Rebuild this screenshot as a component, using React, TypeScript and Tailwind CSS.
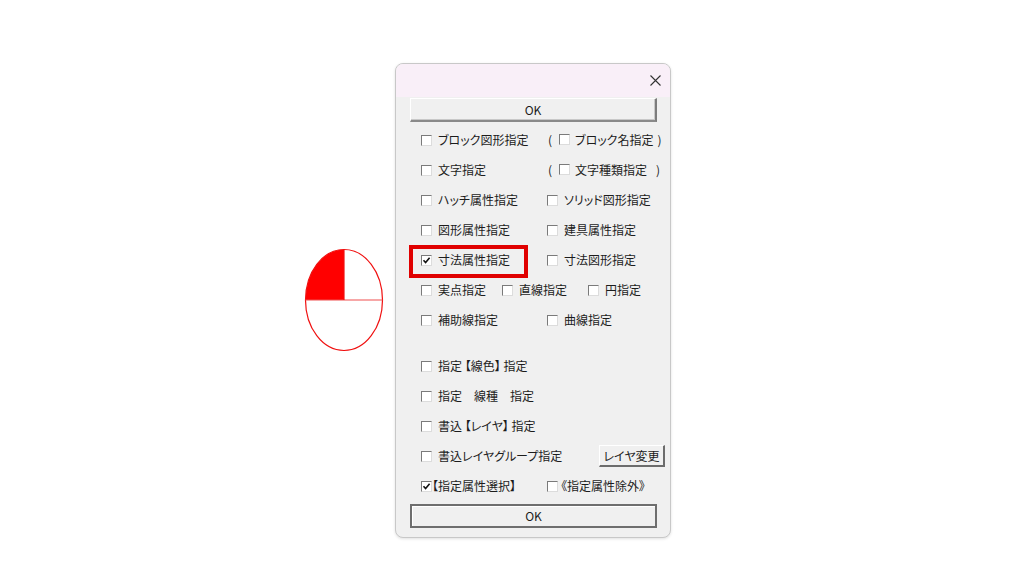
import React from "react";

const font = "font-['Noto_Sans_CJK_JP','Noto_Sans',sans-serif] [font-feature-settings:'palt']";

function Box({ checked = false }: { checked?: boolean }) {
  return (
    <span className="relative inline-block w-[11px] h-[11px] shrink-0 bg-white border-t border-l border-t-[#7a7a7a] border-l-[#7a7a7a] border-r border-b border-r-[#dcdcdc] border-b-[#dcdcdc]">
      {checked && (
        <svg className="absolute left-[0px] top-[0px]" width="9" height="9" viewBox="0 0 9 9">
          <path d="M1.5 4.2 L3.6 6.5 L7.6 1.8" fill="none" stroke="#111" strokeWidth="1.6" />
        </svg>
      )}
    </span>
  );
}

function Item({ label, checked = false, gap = "ml-[6px]" }: { label: string; checked?: boolean; gap?: string }) {
  return (
    <span className="inline-flex items-center">
      <Box checked={checked} />
      <span className={`${gap} whitespace-pre`}>{label}</span>
    </span>
  );
}

function Row({ children, className = "" }: { children: React.ReactNode; className?: string }) {
  return <div className={`relative flex items-center h-[30px] pl-[25px] ${className}`}>{children}</div>;
}

function Cell1({ children }: { children: React.ReactNode }) {
  return <div className="w-[126px] shrink-0 flex items-center">{children}</div>;
}

export default function App() {
  return (
    <div className={`w-[1024px] h-[576px] bg-white flex items-start text-[12px] text-[#1c1c1c] ${font}`}>
      <svg className="ml-[304px] mt-[248px] shrink-0" width="80" height="104" viewBox="0 0 80 104">
        <path d="M40 52 L1.5 52 A38.5 50.5 0 0 1 40 1.5 Z" fill="#ff0000" />
        <ellipse cx="40" cy="52" rx="38.5" ry="50.5" fill="none" stroke="#f01010" strokeWidth="1.2" />
        <line x1="1.5" y1="52" x2="78.5" y2="52" stroke="#f05050" strokeWidth="1.2" />
        <line x1="40" y1="1.5" x2="40" y2="52" stroke="#f01010" strokeWidth="1.2" />
      </svg>

      <div className="ml-[11px] mt-[63px] w-[276px] h-[475px] shrink-0 rounded-[8px] border border-[#c8c8c8] bg-[#f0f0f0] overflow-hidden shadow-[0_1px_3px_rgba(0,0,0,0.12)] flex flex-col">
        <div className="h-[33px] bg-[#f9eff8] flex items-center justify-end pr-[9px]">
          <svg width="11" height="11" viewBox="0 0 11 11">
            <path d="M0.5 0.5 L10.5 10.5 M10.5 0.5 L0.5 10.5" stroke="#333" strokeWidth="1.1" />
          </svg>
        </div>

        <div className="ml-[14px] mt-[1px] w-[247px] h-[24px] flex items-center justify-center bg-[#f0f0f0] border-t border-l border-t-[#ffffff] border-l-[#ffffff] border-r-2 border-b-2 border-r-[#7c7c7c] border-b-[#8a8a8a] shadow-[inset_-1px_-1px_0_#c8c8c8]">
          OK
        </div>

        <div className="mt-[3px] flex flex-col">
          <Row>
            <Cell1><Item label="ブロック図形指定" /></Cell1>
            <span className="ml-[1px]">(</span>
            <span className="ml-[7px]"><Item label="ブロック名指定" gap="ml-[5px]" /></span>
            <span className="ml-[4px]">)</span>
          </Row>
          <Row>
            <Cell1><Item label="文字指定" /></Cell1>
            <span className="ml-[1px]">(</span>
            <span className="ml-[7px]"><Item label="文字種類指定" gap="ml-[5px]" /></span>
            <span className="ml-[9px]">)</span>
          </Row>
          <Row>
            <Cell1><Item label="ハッチ属性指定" /></Cell1>
            <Item label="ソリッド図形指定" />
          </Row>
          <Row>
            <Cell1><Item label="図形属性指定" /></Cell1>
            <Item label="建具属性指定" />
          </Row>
          <Row>
            <div className="absolute left-[13px] top-[0px] w-[119px] h-[33px] border-[4px] border-[#e00000]" />
            <Cell1><Item label="寸法属性指定" checked /></Cell1>
            <Item label="寸法図形指定" />
          </Row>
          <Row>
            <div className="w-[81px] shrink-0 flex items-center"><Item label="実点指定" /></div>
            <div className="w-[86px] shrink-0 flex items-center"><Item label="直線指定" /></div>
            <Item label="円指定" />
          </Row>
          <Row>
            <Cell1><Item label="補助線指定" /></Cell1>
            <Item label="曲線指定" />
          </Row>
        </div>

        <div className="mt-[16px] flex flex-col">
          <Row><Item label="指定 【線色】 指定" /></Row>
          <Row><Item label="指定　線種　指定" /></Row>
          <Row><Item label="書込 【レイヤ】 指定" /></Row>
          <Row>
            <Item label="書込レイヤグループ指定" />
            <div className="ml-auto mr-[5px] w-[66px] h-[22px] flex items-center justify-center bg-[#f0f0f0] border-t border-l border-t-white border-l-white border-r-2 border-b-2 border-r-[#6c6c6c] border-b-[#6c6c6c]">
              レイヤ変更
            </div>
          </Row>
          <Row>
            <Cell1><Item label="【指定属性選択】" checked gap="ml-[0px]" /></Cell1>
            <Item label="《指定属性除外》" gap="ml-[3px]" />
          </Row>
        </div>

        <div className="ml-[14px] mt-[3px] w-[247px] h-[24px] flex items-center justify-center bg-[#f0f0f0] border-2 border-[#6e6e6e] shadow-[inset_1px_1px_0_#ffffff]">
          OK
        </div>
      </div>
    </div>
  );
}
